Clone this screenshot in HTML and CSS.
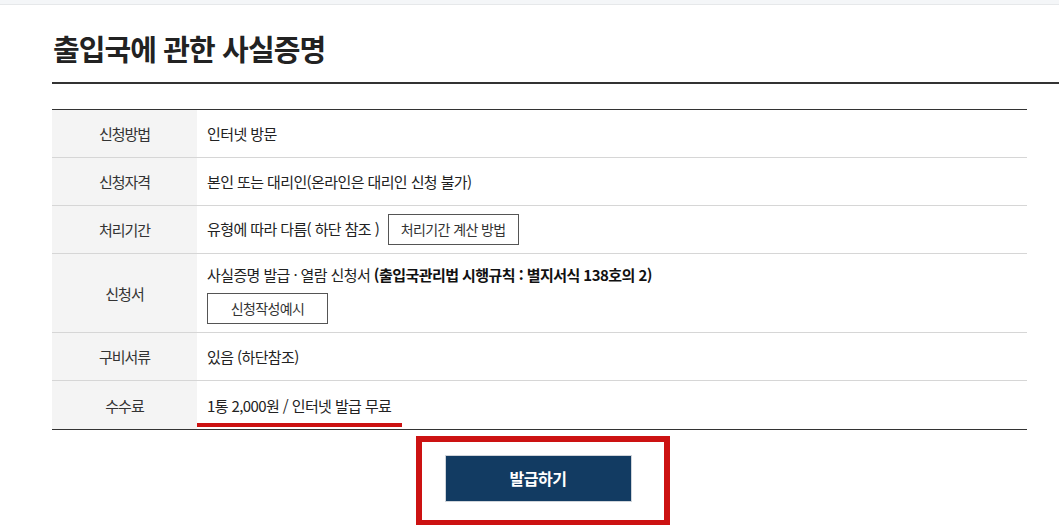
FILE: index.html
```html
<!DOCTYPE html>
<html lang="ko">
<head>
  <meta charset="UTF-8" />
  <meta name="viewport" content="width=device-width, initial-scale=1.0"/>
  <title>출입국에 관한 사실증명</title>
  <link rel="stylesheet" href="styles.css">
</head>
<body>
  <div class="top-strip"></div>

  <div class="content">
    <h2 class="page-title">출입국에 관한 사실증명</h2>

    <table class="info-table">
      <tr>
        <th>신청방법</th>
        <td>인터넷 방문</td>
      </tr>
      <tr>
        <th>신청자격</th>
        <td>본인 또는 대리인(온라인은 대리인 신청 불가)</td>
      </tr>
      <tr>
        <th>처리기간</th>
        <td>유형에 따라 다름( 하단 참조 ) <a href="#" class="btn-line">처리기간 계산 방법</a></td>
      </tr>
      <tr class="row-tall">
        <th>신청서</th>
        <td>
          <div class="form-name">사실증명 발급 · 열람 신청서 <b>(출입국관리법 시행규칙 : 별지서식 138호의 2)</b></div>
          <a href="#" class="btn-line btn-wide">신청작성예시</a>
        </td>
      </tr>
      <tr>
        <th>구비서류</th>
        <td>있음 (하단참조)</td>
      </tr>
      <tr class="row-last">
        <th>수수료</th>
        <td><span class="fee">1통 2,000원 / 인터넷 발급 무료</span></td>
      </tr>
    </table>

    <div class="action">
      <div class="highlight-box">
        <a href="#" class="btn-issue">발급하기</a>
      </div>
    </div>
  </div>
</body>
</html>
```

FILE: styles.css
```css
* {
  box-sizing: border-box;
}

body {
  margin: 0;
  background: #fff;
  color: #333;
  font-family: "Noto Sans CJK KR", "Noto Sans", sans-serif;
  overflow: hidden;
  height: 525px;
}

.top-strip {
  height: 5px;
  background: #f4f6f8;
  border-bottom: 1px solid #e6e8ea;
}

.content {
  padding-left: 52px;
}

.page-title {
  margin: 0;
  padding: 23px 0 0 1px;
  height: 79px;
  font-size: 29px;
  font-weight: 700;
  letter-spacing: -0.9px;
  line-height: 40px;
  color: #222;
  border-bottom: 2px solid #333;
}

.info-table {
  margin-top: 25px;
  width: 975px;
  border-collapse: collapse;
  border-top: 1px solid #333;
  border-bottom: 1px solid #333;
  font-size: 15px;
  letter-spacing: -0.6px;
}

.info-table th,
.info-table td {
  height: 48px;
  border-bottom: 1px solid #d6d6d6;
  vertical-align: middle;
  padding: 0 10px;
}

.info-table th {
  width: 145px;
  background: #f4f4f4;
  font-weight: 400;
  color: #333;
  letter-spacing: -1px;
}

.info-table td {
  color: #222;
}

.row-last th,
.row-last td {
  height: 49px;
  border-bottom: 0;
}

.row-tall th,
.row-tall td {
  height: 79px;
}

.row-tall td {
  padding-top: 8px;
  padding-bottom: 8px;
}

.form-name {
  line-height: 24px;
}

.form-name b {
  font-weight: 700;
  color: #111;
  letter-spacing: -0.55px;
}

.btn-line {
  display: inline-block;
  margin-left: 5px;
  height: 31px;
  padding: 0 12px;
  line-height: 29px;
  border: 1px solid #555;
  color: #333;
  font-size: 14px;
  letter-spacing: -0.6px;
  text-decoration: none;
}

.btn-wide {
  margin: 6px 0 0 0;
  width: 121px;
  text-align: center;
}

.fee {
  display: inline-block;
  position: relative;
}

.fee::after {
  content: "";
  position: absolute;
  left: -10px;
  right: -11px;
  bottom: -11px;
  height: 4px;
  background: #cc1212;
}

.action {
  width: 975px;
  display: flex;
  justify-content: center;
  padding-left: 6px;
  margin-top: 6px;
}

.highlight-box {
  width: 254px;
  height: 90px;
  border: 6px solid #cc1212;
  padding: 13px 0 0 23px;
}

.btn-issue {
  display: block;
  width: 187px;
  height: 47px;
  line-height: 45px;
  background: #123b62;
  border: 1px solid #cfd4da;
  color: #fff;
  text-align: center;
  font-size: 16px;
  font-weight: 700;
  letter-spacing: -0.5px;
  text-decoration: none;
}
```
